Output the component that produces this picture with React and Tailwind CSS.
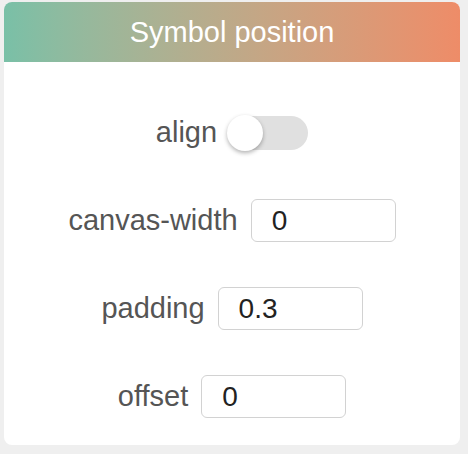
import React from 'react';

const font = { fontFamily: '"Liberation Sans", Arial, sans-serif' };

function Field({ label, value }) {
  return (
    <div className="flex items-center justify-center gap-[13px] h-[43px]">
      <span className="text-[29px] leading-none text-[#555555]">{label}</span>
      <input
        readOnly
        value={value}
        className="w-[145px] h-[43px] rounded-[6px] border border-[#d2d2d2] bg-white px-[20px] text-[28px] text-[#222222] outline-none"
        style={font}
      />
    </div>
  );
}

export default function App() {
  return (
    <div className="min-h-screen bg-[#efefef] pt-[2px] pl-[4px]" style={font}>
      <div className="w-[456px] h-[443px] rounded-[8px] bg-white overflow-hidden flex flex-col">
        {/* header */}
        <div className="h-[60px] flex items-center justify-center bg-gradient-to-r from-[#79c0a7] to-[#ee8c68]">
          <span className="text-[29px] text-white leading-none">Symbol position</span>
        </div>

        {/* body */}
        <div className="flex flex-col gap-[45px] pt-[49px]">
          <div className="flex items-center justify-center gap-[11px] h-[43px]">
            <span className="text-[29px] leading-none text-[#555555]">align</span>
            <div className="relative w-[80px] h-[34px] rounded-full bg-[#e0e0e0]">
              <div className="absolute left-[-1px] top-[-1px] w-[36px] h-[36px] rounded-full bg-white shadow-[0_2px_4px_rgba(0,0,0,0.3)]" />
            </div>
          </div>
          <Field label="canvas-width" value="0" />
          <Field label="padding" value="0.3" />
          <Field label="offset" value="0" />
        </div>
      </div>
    </div>
  );
}
